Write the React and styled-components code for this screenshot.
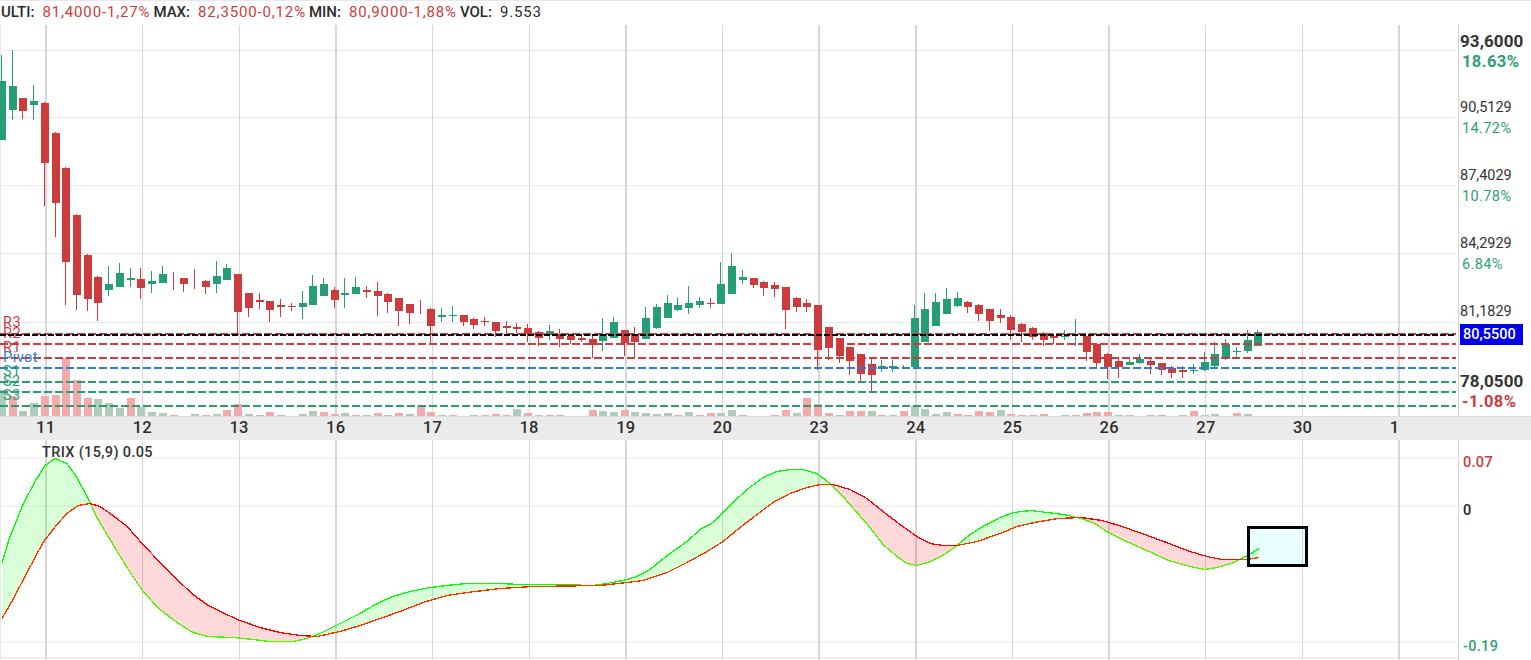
import React from "react";
import styled, { createGlobalStyle } from "styled-components";

const RED = "#cc3c3c";
const GREEN = "#259e76";

// [direction, wick top, body top, body bottom, wick bottom, volume direction, volume top]
const candles = [
  ["g",55,81,140,140,"g",390],["g",50,86,110,120,"r",396],["r",98,98,111,119,"g",411],["g",85,101,105,120,"g",403],
  ["r",102,103,163,206,"r",396],["r",132,133,203,237,"r",395],["r",167,168,262,305,"r",358],["r",214,215,295,310,"r",380],
  ["r",254,255,299,311,"r",398],["r",276,277,303,321,"g",399],["g",266,284,290,296,"g",403],["g",263,273,287,287,"g",408],
  ["g",268,278,280,287,"r",398],["r",268,279,288,299,"g",407],["g",271,281,284,293,"g",412],["g",266,274,283,283,"g",413],
  ["r",272,272,272,290,"r",415],["r",278,278,284,292,"",416],["r",269,269,269,289,"g",414],["r",280,281,287,294,"r",415],
  ["g",261,276,284,293,"g",414],["g",264,268,280,280,"r",410],["r",274,274,312,333,"r",404],["r",293,293,308,317,"g",414],
  ["r",293,300,302,309,"g",415],["r",301,301,310,322,"r",412],["r",299,305,307,317,"g",415],["r",303,306,307,311,"",416],
  ["g",291,303,307,319,"g",414],["g",275,286,305,305,"g",411],["g",278,284,296,296,"r",412],["r",287,290,300,308,"r",414],
  ["g",278,293,295,308,"g",413],["g",277,287,294,294,"r",415],["r",286,290,292,298,"g",415],["r",282,291,296,316,"r",413],
  ["r",293,294,302,313,"g",415],["r",298,298,311,326,"r",413],["r",304,304,313,324,"g",414],["r",300,300,300,314,"r",406],
  ["r",308,309,326,344,"r",412],["g",308,315,317,322,"g",415],["g",306,315,316,322,"r",415],["r",315,315,322,326,"",416],
  ["r",318,319,325,329,"g",415],["r",317,321,322,326,"r",415],["r",322,322,331,337,"r",414],["r",321,326,328,333,"r",415],
  ["r",323,327,329,333,"g",409],["r",324,328,334,342,"r",413],["r",331,332,338,346,"g",415],["g",325,331,334,340,"r",415],
  ["r",329,334,339,347,"r",415],["r",334,336,340,344,"",416],["r",334,338,340,342,"",416],["r",335,339,345,358,"r",410],
  ["g",318,334,341,351,"g",411],["g",317,322,338,338,"g",412],["r",330,330,343,356,"r",410],["r",327,334,342,358,"g",412],
  ["g",307,318,339,339,"g",413],["g",304,307,328,329,"g",414],["g",295,303,318,318,"g",413],["g",298,305,310,311,"r",415],
  ["g",286,303,308,314,"g",412],["g",297,301,305,308,"r",415],["r",298,303,304,308,"r",413],["g",262,284,304,304,"g",413],
  ["g",253,266,294,294,"g",410],["g",270,277,280,284,"r",415],["r",278,278,285,288,"",416],["r",281,282,288,296,"",416],
  ["r",282,285,289,297,"r",415],["r",287,287,310,329,"r",410],["r",297,298,307,312,"g",413],["r",299,303,307,312,"r",398],
  ["r",305,305,350,370,"r",404],["r",327,327,348,360,"r",413],["r",338,338,356,363,"g",415],["r",347,347,361,375,"r",411],
  ["r",354,354,374,382,"r",411],["r",358,364,375,391,"g",411],["g",360,366,369,372,"r",415],["g",360,366,368,372,"g",415],
  ["r",365,365,365,368,"r",411],["g",305,318,367,367,"g",406],["g",293,309,342,342,"g",409],["g",293,302,326,326,"g",414],
  ["g",288,299,314,314,"g",412],["g",292,298,306,307,"r",414],["r",301,302,307,313,"r",415],["r",304,305,314,321,"r",411],
  ["r",309,309,321,331,"r",412],["r",309,315,318,323,"g",410],["r",315,317,330,340,"r",414],["r",323,324,332,342,"r",415],
  ["r",327,328,337,340,"r",415],["r",332,333,340,346,"r",414],["r",334,336,338,344,"",416],["g",330,336,337,340,"g",415],
  ["g",319,319,319,346,"r",415],["r",336,336,352,361,"r",413],["r",344,344,363,369,"r",412],["r",353,354,367,379,"r",412],
  ["r",359,361,367,378,"g",415],["g",359,362,365,365,"g",415],["g",354,359,363,364,"",416],["r",358,361,365,374,"r",415],
  ["r",363,363,370,375,"r",415],["r",366,368,373,378,"",416],["r",366,370,372,378,"g",415],["g",364,370,371,374,"r",411],
  ["g",352,362,370,371,"g",415],["g",342,354,366,367,"g",414],["g",339,344,359,360,"",416],["g",347,351,352,359,"r",413],
  ["g",330,340,351,353,"g",414],["g",330,332,346,346,"",416],
];

const gridLines = [
  { x: 46, wide: true }, { x: 142.5 }, { x: 239.5 }, { x: 336, wide: true }, { x: 432.5 },
  { x: 529.5 }, { x: 626, wide: true }, { x: 722.5 }, { x: 819, wide: true }, { x: 916, wide: true },
  { x: 1012.5 }, { x: 1109, wide: true }, { x: 1205.5 }, { x: 1302.5 }, { x: 1399, wide: true },
];

const levels = [
  { label: "R3", y: 334, textY: 322.5, color: RED },
  { label: "R2", y: 344, textY: 333, color: RED },
  { label: "R1", y: 358, textY: 347, color: RED },
  { label: "Pivot", y: 368, textY: 357, color: "#2a7de1" },
  { label: "S1", y: 382, textY: 371, color: GREEN },
  { label: "S2", y: 392, textY: 381, color: GREEN },
  { label: "S3", y: 406, textY: 395, color: GREEN },
];

const dates = ["11", "12", "13", "16", "17", "18", "19", "20", "23", "24", "25", "26", "27", "30", "1"];

const trixLine = [
  [2,563],[10,537],[23,505],[35,482],[45,466],[55,459],[67,464],[77,478],[87,497],[97,518],[110,540],[127,568],
  [143,592],[160,610],[177,623],[193,633],[208,637],[233,638],[253,640],[270,642],[293,642],[307,639],[320,634],
  [340,624],[360,614],[377,604],[393,597],[410,592],[430,588],[447,586],[467,584],[500,584],[520,585],[557,585],
  [593,586],[607,584],[623,581],[637,577],[650,570],[667,556],[687,542],[700,530],[713,523],[723,513],[733,503],
  [747,490],[763,478],[777,472],[790,470],[803,470],[817,474],[830,484],[843,497],[857,513],[870,528],[883,545],
  [897,557],[907,564],[917,566],[930,562],[943,556],[957,546],[970,535],[983,527],[1000,518],[1014,513],[1031,511],
  [1047,513],[1064,515],[1081,519],[1095,524],[1108,533],[1129,543],[1149,552],[1169,561],[1190,567],[1205,570],
  [1217,568],[1231,564],[1244,558],[1259,549],
];

const signalLine = [
  [2,619],[13,600],[27,573],[43,543],[57,525],[67,514],[78,506],[90,504],[100,507],[113,516],[127,527],[143,545],
  [160,563],[177,580],[193,595],[207,605],[220,612],[240,621],[260,628],[280,633],[300,636],[317,637],[340,632],
  [360,626],[380,619],[400,612],[423,603],[447,596],[467,593],[500,589],[533,587],[600,586],[627,583],[643,581],
  [667,573],[687,563],[707,552],[723,542],[740,528],[757,515],[773,503],[790,494],[807,488],[820,485],[833,485],
  [850,490],[867,499],[883,512],[900,525],[917,537],[930,544],[943,546],[957,546],[977,542],[1000,534],[1017,527],
  [1034,523],[1058,519],[1081,518],[1102,521],[1119,526],[1142,534],[1169,544],[1190,552],[1207,557],[1222,560],
  [1247,560],[1259,558],
];

const valueAt = (points, x) => {
  for (let i = 1; i < points.length; i++) {
    const [x0, y0] = points[i - 1];
    const [x1, y1] = points[i];
    if (x <= x1) return y0 + ((y1 - y0) * (x - x0)) / (x1 - x0);
  }
  return points[points.length - 1][1];
};

// split the space between the two lines in runs where one of them stays on top
const buildRuns = () => {
  const runs = [];
  for (let x = 2; x <= 1259; x++) {
    const g = valueAt(trixLine, x);
    const r = valueAt(signalLine, x);
    const up = g <= r;
    const last = runs[runs.length - 1];
    if (last && last.up === up) last.points.push([x, g, r]);
    else runs.push({ up, points: [[x, g, r]] });
  }
  return runs;
};

const toPath = (pts) => "M" + pts.map((p) => p.join(" ")).join("L");

const GlobalStyle = createGlobalStyle`
  html, body {
    margin: 0;
    padding: 0;
    background: #fff;
    overflow: hidden;
  }
  body {
    font-family: Roboto, "Liberation Sans", sans-serif;
  }
`;

const Page = styled.div`
  width: 1531px;
  height: 660px;
  display: flex;
  flex-direction: column;
  overflow: hidden;
  border-top: 1px solid #e8e8e8;
  box-sizing: border-box;
`;

const InfoBar = styled.div`
  height: 24px;
  display: flex;
  align-items: center;
  padding: 0 0 2px 1px;
  font-size: 15px;
  white-space: nowrap;
  box-sizing: border-box;
`;

const InfoLabel = styled.span`
  color: #2b2b2b;
  font-weight: 500;
  margin-right: 8px;
`;

const InfoValue = styled.span`
  color: ${RED};
  letter-spacing: 0.85px;
  margin-right: 3px;
`;

const InfoCount = styled.span`
  color: #2b2b2b;
  letter-spacing: 0.85px;
`;

const PriceRow = styled.div`
  height: 391px;
  display: flex;
`;

const Plot = styled.svg`
  display: block;
  width: 1458px;
  flex: none;
`;

const Axis = styled.div`
  flex: 1;
  border-left: 1px solid #d4d4d4;
  display: flex;
  flex-direction: column;
  padding-left: 1px;
`;

const AxisTick = styled.div`
  height: ${(p) => p.$height || 68}px;
  display: flex;
  flex-direction: column;
  flex: none;
  margin-top: ${(p) => p.$offset || 0}px;
`;

const Price = styled.div`
  height: 20px;
  line-height: 20px;
  font-size: ${(p) => (p.$strong ? 17 : 14.5)}px;
  font-weight: ${(p) => (p.$strong ? 700 : 400)};
  color: #333;
  letter-spacing: ${(p) => (p.$strong ? 0.1 : 0)}px;
`;

const Percent = styled.div`
  height: 21px;
  line-height: 21px;
  padding-left: 2px;
  font-size: ${(p) => (p.$strong ? 16.5 : 14.5)}px;
  font-weight: ${(p) => (p.$strong ? 700 : 400)};
  letter-spacing: 0.4px;
  color: ${(p) => (p.$down ? RED : "#2f9e78")};
`;

const LastPrice = styled.div`
  width: 60px;
  height: 21px;
  line-height: 21px;
  margin: 2px 0 26px 0;
  padding-left: 3px;
  background: #0000ee;
  color: #fff;
  font-size: 14.5px;
  font-weight: 500;
  flex: none;
`;

const DateBar = styled.div`
  height: 24px;
  flex: none;
  display: grid;
  grid-template-columns: repeat(15, 96.7px);
  align-items: center;
  padding: 0 0 3px 36px;
  background: #ebebeb;
  border-top: 1px solid #ddd;
  box-sizing: border-box;
`;

const DateLabel = styled.span`
  font-size: 16.5px;
  font-weight: 500;
  color: #2e2e2e;
  letter-spacing: 0.3px;
`;

const TrixRow = styled.div`
  position: relative;
  flex: 1;
  display: flex;
  min-height: 0;
`;

const TrixTitle = styled.div`
  position: absolute;
  left: 42px;
  top: 4px;
  font-size: 14.5px;
  font-weight: 500;
  letter-spacing: 0.35px;
  color: #333;
`;

const TrixValue = styled.div`
  height: 20px;
  line-height: 20px;
  flex: none;
  margin-top: ${(p) => p.$offset}px;
  padding-left: 3px;
  font-size: 14.5px;
  font-weight: 500;
  letter-spacing: 0.3px;
  color: ${(p) => p.$color};
`;

const HGrid = styled.line`
  stroke: ${(p) => (p.$edge ? "#dcdcdc" : "#e9e9e9")};
  stroke-width: 1;
`;

const VGrid = styled.line`
  stroke: #d6d6d6;
  stroke-width: ${(p) => (p.$wide ? 2 : 1)};
`;

const Bar = styled.rect`
  fill: ${(p) => (p.$up ? GREEN : RED)};
  shape-rendering: crispEdges;
`;

const VolumeBar = styled.rect`
  fill: ${(p) => (p.$up ? "#aecbbb" : "#f4aaaa")};
  shape-rendering: crispEdges;
`;

const LevelLine = styled.line`
  stroke-width: 2;
  stroke-dasharray: ${(p) => (p.$last ? "6 2" : "8 3")};
  shape-rendering: crispEdges;
`;

const LevelLabel = styled.text`
  font-size: 14.5px;
  dominant-baseline: central;
  letter-spacing: 0.5px;
`;

const Curve = styled.path`
  fill: none;
  stroke: ${(p) => p.$color};
  stroke-width: 1.3;
  shape-rendering: crispEdges;
`;

const Area = styled.path`
  fill: ${(p) => (p.$up ? "rgba(0,255,0,0.15)" : "rgba(255,0,0,0.15)")};
`;

const Blend = styled.path`
  fill: none;
  stroke: ${(p) => (p.$up ? "rgba(255,170,0,0.35)" : "rgba(190,230,0,0.5)")};
  stroke-width: 1.3;
`;

const Selection = styled.rect`
  fill: rgba(0, 255, 255, 0.085);
  stroke: #000;
  stroke-width: 3;
  shape-rendering: crispEdges;
`;

const Candle = ({ data, index }) => {
  const [dir, wickTop, bodyTop, bodyBottom, wickBottom, volDir, volTop] = data;
  const x = Math.round(1.8 + 10.74 * index - 4);
  const up = dir === "g";
  return (
    <g>
      {volDir && <VolumeBar x={x} y={volTop} width={8} height={416 - volTop} $up={volDir === "g"} />}
      <Bar x={x + 3} y={wickTop} width={1} height={wickBottom - wickTop} $up={up} />
      <Bar x={x} y={bodyTop} width={8} height={bodyBottom - bodyTop} $up={up} />
    </g>
  );
};

const PricePane = () => (
  <Plot viewBox="0 25 1458 391">
    <line x1="0.5" y1="25" x2="0.5" y2="416" stroke="#e8e8e8" />
    {[50.5, 117.5, 185.5, 253.5, 322.5, 391.5].map((y) => (
      <HGrid key={y} x1="0" x2="1456" y1={y} y2={y} />
    ))}
    {gridLines.map((l) => (
      <VGrid key={l.x} x1={l.x} x2={l.x} y1="25" y2="416" $wide={l.wide} />
    ))}
    {candles.map((c, i) => (
      <Candle key={i} data={c} index={i} />
    ))}
    {levels.map((l) => (
      <LevelLine key={l.label} x1="0" x2="1456" y1={l.y} y2={l.y} stroke={l.color} />
    ))}
    {levels.map((l) => (
      <LevelLabel key={l.label} x="3" y={l.textY} fill={l.color}>
        {l.label}
      </LevelLabel>
    ))}
    <LevelLine $last x1="0" x2="1456" y1="335" y2="335" stroke="#000" />
  </Plot>
);

const TrixPane = () => {
  const runs = buildRuns();
  return (
    <Plot viewBox="0 441 1458 219">
      <line x1="0.5" y1="441" x2="0.5" y2="660" stroke="#e8e8e8" />
      {[458.5, 506.5, 642.5].map((y) => (
        <HGrid key={y} x1="0" x2="1456" y1={y} y2={y} />
      ))}
      <HGrid $edge x1="0" x2="1458" y1="658.5" y2="658.5" />
      {gridLines.map((l) => (
        <VGrid key={l.x} x1={l.x} x2={l.x} y1="441" y2="660" $wide={l.wide} />
      ))}
      {runs.map((run, i) => {
        const top = run.points.map(([x, g, r]) => [x, run.up ? g : r]);
        const bottom = run.points.map(([x, g, r]) => [x, run.up ? r : g]);
        return <Area key={i} $up={run.up} d={toPath([...top, ...[...bottom].reverse()]) + "Z"} />;
      })}
      <Curve $color="#00ff00" d={toPath(trixLine)} />
      <Curve $color="#ff0000" d={toPath(signalLine)} />
      {runs.map((run, i) => (
        <Blend key={i} $up={run.up} d={toPath(run.points.map(([x, g, r]) => [x, run.up ? r : g]))} />
      ))}
      <Selection x="1248.5" y="527.5" width="58" height="38" />
    </Plot>
  );
};

const App = () => (
  <Page>
    <GlobalStyle />
    <InfoBar>
      <InfoLabel>ULTI:</InfoLabel>
      <InfoValue>81,4000-1,27%</InfoValue>
      <InfoLabel>MAX:</InfoLabel>
      <InfoValue>82,3500-0,12%</InfoValue>
      <InfoLabel>MIN:</InfoLabel>
      <InfoValue>80,9000-1,88%</InfoValue>
      <InfoLabel>VOL:</InfoLabel>
      <InfoCount>9.553</InfoCount>
    </InfoBar>
    <PriceRow>
      <PricePane />
      <Axis>
        <AxisTick $offset={6} $height={67}>
          <Price $strong>93,6000</Price>
          <Percent $strong>18.63%</Percent>
        </AxisTick>
        <AxisTick>
          <Price>90,5129</Price>
          <Percent>14.72%</Percent>
        </AxisTick>
        <AxisTick>
          <Price>87,4029</Price>
          <Percent>10.78%</Percent>
        </AxisTick>
        <AxisTick>
          <Price>84,2929</Price>
          <Percent>6.84%</Percent>
        </AxisTick>
        <Price>81,1829</Price>
        <LastPrice>80,5500</LastPrice>
        <Price $strong>78,0500</Price>
        <Percent $strong $down>-1.08%</Percent>
      </Axis>
    </PriceRow>
    <DateBar>
      {dates.map((d) => (
        <DateLabel key={d}>{d}</DateLabel>
      ))}
    </DateBar>
    <TrixRow>
      <TrixTitle>TRIX (15,9) 0.05</TrixTitle>
      <TrixPane />
      <Axis>
        <TrixValue $offset={13} $color={RED}>0.07</TrixValue>
        <TrixValue $offset={28} $color="#222">0</TrixValue>
        <TrixValue $offset={116} $color="#2f9e78">-0.19</TrixValue>
      </Axis>
    </TrixRow>
  </Page>
);

export default App;
